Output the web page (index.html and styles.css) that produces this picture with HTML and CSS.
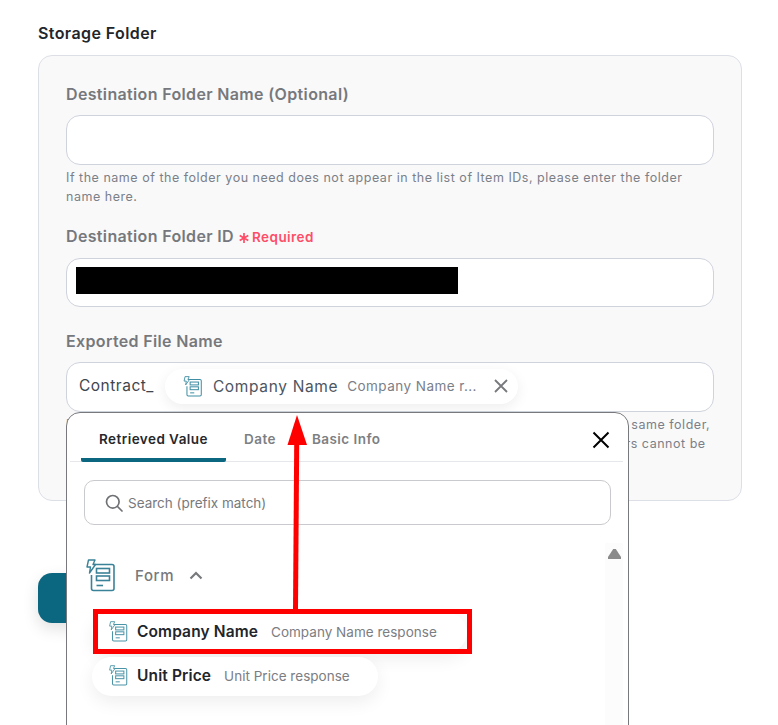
FILE: index.html
```html
<!DOCTYPE html>
<html lang="en">
<head>
<meta charset="utf-8">
<title>Storage Folder</title>
<link rel="stylesheet" href="styles.css">
</head>
<body>
<svg class="defs" width="0" height="0" aria-hidden="true">
  <symbol id="form-icon" viewBox="0 0 30 33">
    <path d="M8 5.5H26a2 2 0 0 1 2 2V29.500a2 2 0 0 1-2 2H7.500a2 2 0 0 1-2-2V16" fill="none" stroke="currentColor" stroke-width="1.6"/>
    <rect x="10.500" y="9.500" width="13" height="4.500" fill="none" stroke="currentColor" stroke-width="1.6"/>
    <rect x="10.500" y="17" width="13" height="4.500" fill="none" stroke="currentColor" stroke-width="1.6"/>
    <path d="M10.500 26.500H17" fill="none" stroke="currentColor" stroke-width="1.6"/>
    <path d="M2.500 1H9L7 5.500H9.500L3.500 14L4.500 8H1Z" fill="#fff" stroke="currentColor" stroke-width="1.4" stroke-linejoin="round"/>
  </symbol>
</svg>
<main class="page">
  <h2 class="section-title">Storage Folder</h2>
  <section class="card">
    <div class="field field-first">
      <label class="label">Destination Folder Name (Optional)</label>
      <div class="input"></div>
      <p class="hint">If the name of the folder you need does not appear in the list of Item IDs, please enter the folder name here.</p>
    </div>
    <div class="field field-second">
      <label class="label label-row">Destination Folder ID
        <span class="required">
          <svg class="star" viewBox="0 0 10 10"><path d="M5 0V10M0.700 2.500L9.300 7.500M9.300 2.500L0.700 7.500"/></svg>
          Required
        </span>
      </label>
      <div class="input input-tall"><span class="redacted"></span></div>
    </div>
    <div class="field">
      <label class="label">Exported File Name</label>
      <div class="input input-chips">
        <span class="prefix">Contract_</span>
        <span class="chip">
          <svg class="icon-chip"><use href="#form-icon"/></svg>
          <span class="chip-name">Company Name</span>
          <span class="chip-sub">Company Name r...</span>
          <svg class="chip-x" viewBox="0 0 14 14"><path d="M1 1L13 13M13 1L1 13"/></svg>
        </span>
      </div>
      <p class="hint">If a file with the same name already exists, the new file will be saved alongside it, in the same folder, so, please enter a distinct name for every file. Please note that certain special characters cannot be used.</p>
    </div>
  </section>
  <div class="submit"></div>
</main>

<div class="popup">
  <div class="tabs">
    <div class="tab tab-active">Retrieved Value</div>
    <div class="tab">Date</div>
    <div class="tab">Basic Info</div>
    <svg class="close" viewBox="0 0 18 18"><path d="M1.500 1.500L16.500 16.500M16.500 1.500L1.500 16.500"/></svg>
  </div>
  <div class="search">
    <svg class="search-icon" viewBox="0 0 18 18"><circle cx="7.800" cy="7.800" r="6.300"/><path d="M12.500 12.500L17 17"/></svg>
    <span>Search (prefix match)</span>
  </div>
  <div class="list">
    <div class="scrollbar"><span class="scroll-up"></span></div>
    <div class="group">
      <svg class="icon-group"><use href="#form-icon"/></svg>
      <span class="group-name">Form</span>
      <svg class="caret" viewBox="0 0 14 9"><path d="M1.500 7.500L7 2L12.500 7.500"/></svg>
    </div>
    <div class="option option-first">
      <svg class="icon-option"><use href="#form-icon"/></svg>
      <span class="option-name">Company Name</span>
      <span class="option-sub">Company Name response</span>
    </div>
    <div class="option">
      <svg class="icon-option"><use href="#form-icon"/></svg>
      <span class="option-name">Unit Price</span>
      <span class="option-sub">Unit Price response</span>
    </div>
  </div>
</div>

<div class="red-box"></div>
<svg class="arrow" viewBox="0 0 40 200" width="40" height="200">
  <path d="M19.700 29L18.500 195" fill="none" stroke="#ff0000" stroke-width="5"/>
  <path d="M20 0L10.500 30H30Z" fill="#ff0000"/>
</svg>
</body>
</html>
```

FILE: styles.css
```css
* { box-sizing: border-box; }
html, body { margin: 0; height: 725px; overflow: hidden; background: #fff; }
body { position: relative; font-family: Inter, "Liberation Sans", sans-serif; color: #1f2328; }
.defs { position: absolute; }

.page { padding: 24px 36px 0 38px; }
.section-title { margin: 0 0 12px; font-size: 16px; line-height: 19px; font-weight: 600; letter-spacing: 0.4px; color: #22252a; }
.card { height: 446px; padding: 27px 27px 0; background: #f9f9fa; border: 1px solid #dcdfe6; border-radius: 14px; }

.field-first { margin-bottom: 19px; }
.field-second { margin-bottom: 23px; }
.label { display: block; font-size: 16px; line-height: 22px; font-weight: 600; letter-spacing: 0.35px; color: #76787c; }
.label-row { display: flex; align-items: center; height: 22px; }
.required { display: inline-flex; align-items: center; height: 22px; margin: 2px 0 0 5px; font-size: 13.500px; font-weight: 600; letter-spacing: 0.45px; color: #ff4d67; }
.star { width: 10px; height: 10px; margin: 2px 3px 0 0; fill: none; stroke: #ff4d67; stroke-width: 1.700; }
.input { height: 50px; margin-top: 10px; background: #fff; border: 1px solid #cfd3dc; border-radius: 14px; }
.input-tall { height: 49px; margin-top: 11px; display: flex; align-items: flex-start; padding: 8px 0 0 9px; }
.redacted { width: 382px; height: 27px; background: #000; }
.hint { margin: 3px 0 0; font-size: 12.500px; line-height: 19px; letter-spacing: 0.52px; color: #7b8088; }

.input-chips { display: flex; align-items: center; padding-left: 12px; }
.prefix { font-size: 15.500px; letter-spacing: 0.5px; color: #3f454d; position: relative; top: -2px; }
.chip { display: flex; align-items: center; height: 35px; margin: 0 0 2px 11px; padding: 0 10px 0 18px; background: #fff; border-radius: 18px; box-shadow: 0 4px 14px rgba(0, 0, 0, 0.07); }
.icon-chip { width: 20px; height: 21px; color: #3f8ea3; }
.chip-name { margin-left: 10px; font-size: 15.500px; letter-spacing: 0.65px; color: #4d5561; }
.chip-sub { margin-left: 9px; font-size: 13.500px; letter-spacing: 0.45px; color: #7b8088; }
.chip-x { width: 14px; height: 14px; margin-left: 17px; fill: none; stroke: #77797d; stroke-width: 1.8; }

.submit { width: 120px; height: 50px; margin-top: 72px; background: #0b6780; border-radius: 14px; box-shadow: 0 6px 16px rgba(0, 0, 0, 0.12); }

.popup { position: absolute; left: 66px; top: 412px; width: 563px; height: 340px; background: #fff; border: 1px solid #77797d; border-radius: 14px; }
.tabs { position: relative; display: flex; height: 49px; margin: 0 5px 0 3px; padding-left: 11px; border-bottom: 1px solid #e6e7ea; }
.tab { padding: 18px 18px 0 18px; font-size: 13.500px; font-weight: 600; letter-spacing: 0.45px; color: #7d7f83; }
.tab-active { width: 145px; color: #25282d; border-bottom: 4px solid #0b6780; border-radius: 2px; height: 49px; white-space: nowrap; padding-right: 0; }
.close { position: absolute; right: 13px; top: 18px; width: 18px; height: 18px; fill: none; stroke: #000; stroke-width: 2; }

.search { display: flex; align-items: center; height: 45px; margin: 18px 17px 0 17px; padding-left: 20px; border: 1px solid #c9cacd; border-radius: 10px; font-size: 13.500px; letter-spacing: 0; color: #77797d; }
.search-icon { width: 18px; height: 18px; margin-right: 5px; fill: none; stroke: #6f7175; stroke-width: 1.7; stroke-linecap: round; }

.list { position: relative; padding: 32px 0 0 19px; }
.scrollbar { position: absolute; right: 5px; top: 18px; width: 18px; height: 260px; background: #fcfcfc; }
.scroll-up { position: absolute; left: 3px; top: 6px; width: 13px; height: 10px; background: #8a8a8a; clip-path: polygon(40% 0, 60% 0, 100% 80%, 100% 100%, 0 100%, 0 80%); }
.group { display: flex; align-items: center; height: 37px; }
.icon-group { width: 30px; height: 33px; color: #3a8298; }
.group-name { margin-left: 19px; font-size: 15px; font-weight: 500; letter-spacing: 0.6px; color: #77797d; }
.caret { width: 14px; height: 9px; margin-left: 15px; fill: none; stroke: #77797d; stroke-width: 2.2; }

.option { display: flex; align-items: center; width: max-content; height: 39px; margin: 0 0 0 6px; padding: 0 28px 2px 17px; background: #fff; border-radius: 20px; box-shadow: 0 6px 18px rgba(0, 0, 0, 0.07); }
.option-first { margin-top: 19px; margin-bottom: 5px; padding-right: 30px; }
.icon-option { width: 19px; height: 21px; color: #4a94a8; }
.option-name { margin-left: 9px; font-size: 15.500px; font-weight: 600; letter-spacing: 0.12px; color: #22252a; }
.option-sub { margin-left: 13px; font-size: 13.500px; letter-spacing: 0.02px; color: #7b7d82; }

.red-box { position: absolute; left: 93px; top: 609px; width: 379px; height: 45px; border: 5px solid #ff0000; }
.arrow { position: absolute; left: 277px; top: 415px; }
```
